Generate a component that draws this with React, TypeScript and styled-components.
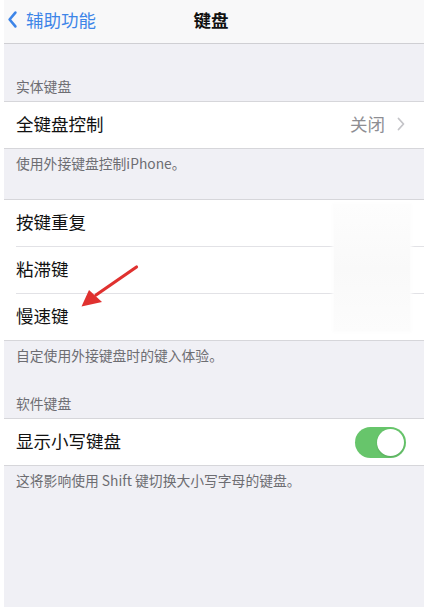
import styled, { createGlobalStyle } from 'styled-components';

const GlobalStyle = createGlobalStyle`
  html, body {
    margin: 0;
    padding: 0;
    background: #ffffff;
  }
  body {
    font-family: "Noto Sans CJK SC", "Noto Sans", "Liberation Sans", sans-serif;
    -webkit-font-smoothing: antialiased;
  }
`;

const Screen = styled.div`
  position: relative;
  margin-left: 4px;
  min-height: 607px;
  background: #f0f0f5;
  overflow: hidden;
`;

const NavBar = styled.div`
  display: grid;
  grid-template-columns: 1fr auto 1fr;
  align-items: center;
  background: #f8f8f9;
  border-bottom: 1px solid #cfcfd3;
  padding-bottom: 4px;
  box-sizing: border-box;
  height: 44px;
`;

const BackButton = styled.div`
  display: flex;
  align-items: center;
  gap: 8px;
  padding-left: 3px;
  color: #3d85e8;
  font-size: 17.5px;
  line-height: 22px;
`;

const NavTitle = styled.div`
  font-size: 17.5px;
  font-weight: 600;
  color: #111;
  line-height: 22px;
  margin-left: -6px;
`;

const SectionHeader = styled.div<{ $top: number }>`
  padding: ${({ $top }) => $top}px 12px 6px;
  font-size: 13.8px;
  line-height: 18px;
  color: #6d6d72;
`;

const SectionFooter = styled.div<{ $bottom: number }>`
  padding: 5px 12px ${({ $bottom }) => $bottom}px;
  font-size: 13.8px;
  line-height: 18px;
  color: #6d6d72;
`;

const Group = styled.div`
  background: #ffffff;
  border-top: 1px solid #d6d6da;
  border-bottom: 1px solid #d6d6da;
`;

const Row = styled.div<{ $divider?: boolean }>`
  display: flex;
  align-items: center;
  justify-content: space-between;
  margin-left: 12px;
  padding: 0 18px 3px 0;
  box-sizing: border-box;
  border-bottom: ${({ $divider }) => ($divider ? '1px solid #e2e2e6' : 'none')};
  height: ${({ $divider }) => ($divider ? 47 : 46)}px;
`;

const Label = styled.span`
  font-size: 17.5px;
  line-height: 22px;
  color: #111;
`;

const Detail = styled.span`
  display: flex;
  align-items: center;
  gap: 12px;
  font-size: 17.5px;
  color: #8e8e93;
  padding-right: 1px;
`;

const Toggle = styled.div<{ $on: boolean }>`
  position: relative;
  width: 51px;
  height: 31px;
  border-radius: 16px;
  background: ${({ $on }) => ($on ? '#67c56b' : '#e5e5ea')};
  margin-top: 3px;
`;

const Knob = styled.div<{ $on: boolean }>`
  position: absolute;
  top: 2px;
  left: ${({ $on }) => ($on ? 22 : 2)}px;
  width: 27px;
  height: 27px;
  border-radius: 50%;
  background: #ffffff;
  box-shadow: 0 1px 2px rgba(0, 0, 0, 0.15);
`;

// white patch laid over the right side of the second group
const Patch = styled.div`
  position: absolute;
  left: 330px;
  top: 205px;
  width: 76px;
  height: 126px;
  background: linear-gradient(180deg, #fdfdfd 0%, #f9f9f9 50%, #fcfcfc 100%);
  box-shadow: 0 0 3px 2px #fdfdfd;
`;

const ArrowLayer = styled.svg`
  position: absolute;
  left: 0;
  top: 0;
  pointer-events: none;
`;

const Chevron = ({ color, w, h, stroke }: { color: string; w: number; h: number; stroke: number }) => (
  <svg width={w} height={h} viewBox={`0 0 ${w} ${h}`}>
    <polyline
      points={`${w - stroke},${stroke} ${stroke},${h / 2} ${w - stroke},${h - stroke}`}
      fill="none"
      stroke={color}
      strokeWidth={stroke}
      strokeLinecap="round"
      strokeLinejoin="round"
    />
  </svg>
);

const Forward = () => (
  <svg width="8" height="14" viewBox="0 0 8 14">
    <polyline points="1.5,1.5 6.5,7 1.5,12.5" fill="none" stroke="#c4c4c8" strokeWidth="1.8" strokeLinecap="round" strokeLinejoin="round" />
  </svg>
);

export default function App() {
  return (
    <>
      <GlobalStyle />
      <Screen>
        <NavBar>
          <BackButton>
            <Chevron color="#3d85e8" w={11} h={19} stroke={2.6} />
            <span>辅助功能</span>
          </BackButton>
          <NavTitle>键盘</NavTitle>
          <div />
        </NavBar>

        <SectionHeader $top={33}>实体键盘</SectionHeader>
        <Group>
          <Row>
            <Label>全键盘控制</Label>
            <Detail>
              关闭
              <Forward />
            </Detail>
          </Row>
        </Group>
        <SectionFooter $bottom={27}>使用外接键盘控制iPhone。</SectionFooter>

        <Group>
          <Row $divider>
            <Label>按键重复</Label>
          </Row>
          <Row $divider>
            <Label>粘滞键</Label>
          </Row>
          <Row>
            <Label>慢速键</Label>
          </Row>
        </Group>
        <SectionFooter $bottom={0}>自定使用外接键盘时的键入体验。</SectionFooter>

        <SectionHeader $top={30}>软件键盘</SectionHeader>
        <Group>
          <Row>
            <Label>显示小写键盘</Label>
            <Toggle $on>
              <Knob $on />
            </Toggle>
          </Row>
        </Group>
        <SectionFooter $bottom={0}>这将影响使用 Shift 键切换大小写字母的键盘。</SectionFooter>

        <Patch />
        <ArrowLayer width="420" height="607" viewBox="0 0 420 607">
          <line x1="132.5" y1="267" x2="92" y2="295" stroke="#e0312f" strokeWidth="3.2" strokeLinecap="round" />
          <polygon points="77.5,306.5 85,290 98,302" fill="#e0312f" />
        </ArrowLayer>
      </Screen>
    </>
  );
}
